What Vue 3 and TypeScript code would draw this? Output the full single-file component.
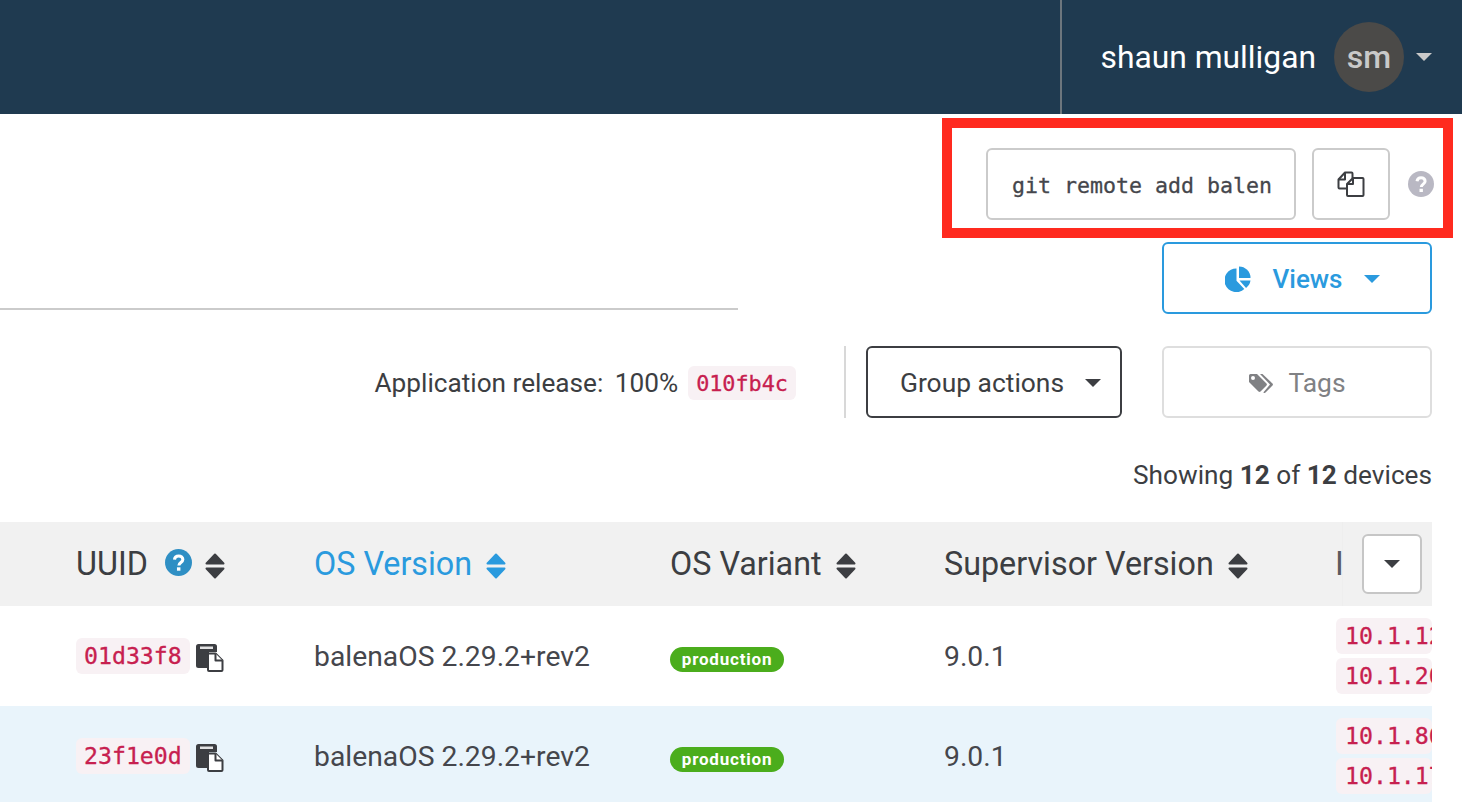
<script setup lang="ts">
interface Device {
  uuid: string;
  os: string;
  variant: string;
  supervisor: string;
  ips: string[];
  selected?: boolean;
}

const columns = [
  { label: 'UUID', help: true },
  { label: 'OS Version', active: true },
  { label: 'OS Variant' },
  { label: 'Supervisor Version' },
];

const devices: Device[] = [
  { uuid: '01d33f8', os: 'balenaOS 2.29.2+rev2', variant: 'production', supervisor: '9.0.1', ips: ['10.1.123.45', '10.1.201.7'] },
  { uuid: '23f1e0d', os: 'balenaOS 2.29.2+rev2', variant: 'production', supervisor: '9.0.1', ips: ['10.1.86.12', '10.1.174.9'], selected: true },
];
</script>

<template>
  <div class="page">
    <header class="topbar">
      <div class="user">
        <span class="user-name">shaun mulligan</span>
        <span class="avatar">sm</span>
        <span class="caret caret-light"></span>
      </div>
    </header>

    <main class="content">
      <div class="git-row">
        <div class="git-input">git remote add balen</div>
        <button class="copy-btn" type="button">
          <svg width="30" height="28" viewBox="0 0 30 28" fill="none" stroke="#3c3e42" stroke-width="2" stroke-linejoin="round">
            <path d="M11 18.500H3.500a1 1 0 0 1-1-1V9.500l6.500-7h6.500a1 1 0 0 1 1 1V8" />
            <path d="M2.500 9.500h6.500v-7" />
            <path d="M17 8h9.500a1 1 0 0 1 1 1v16a1 1 0 0 1-1 1H12a1 1 0 0 1-1-1V14z" fill="#fff" />
            <path d="M11 14h6V8" />
          </svg>
        </button>
        <svg class="help" width="26" height="26" viewBox="0 0 26 26">
          <circle cx="13" cy="13" r="13" fill="#b9b8c3" />
          <path d="M9 10.200c.3-2.200 2-3.400 4.100-3.400 2.300 0 4 1.400 4 3.400 0 2.900-3.800 2.900-3.800 5.800" fill="none" stroke="#fff" stroke-width="3" />
          <rect x="11.500" y="17.800" width="3.400" height="3.200" fill="#fff" />
        </svg>
      </div>

      <div class="views-row">
        <div class="tabs-line"></div>
        <button class="btn btn-views" type="button">
          <svg width="26" height="26" viewBox="0 0 26 26" fill="#2a9ade">
            <path d="M11.500 2.500v12.200l7.800 8.200A11.800 11.800 0 1 1 11.500 2.500z" />
            <path d="M14 0.500a11.500 11.500 0 0 1 11.500 11.500H14z" />
            <path d="M14.500 14.500h11a11.800 11.800 0 0 1-4.400 7.400z" />
          </svg>
          <span>Views</span>
          <span class="caret caret-blue"></span>
        </button>
      </div>

      <div class="toolbar">
        <span class="release">Application release: <span class="release-pct">100%</span></span>
        <code class="code code-release">010fb4c</code>
        <span class="toolbar-sep"></span>
        <button class="btn btn-group" type="button">
          <span>Group actions</span>
          <span class="caret caret-dark"></span>
        </button>
        <button class="btn btn-tags" type="button">
          <svg width="26" height="20" viewBox="0 0 26 20" fill="#808184">
            <path d="M1 2.500A1.500 1.500 0 0 1 2.500 1H9l9.500 9.500a1.500 1.500 0 0 1 0 2L12.500 18.500a1.500 1.500 0 0 1-2 0L1 9zM5 7a2 2 0 1 0 0-4 2 2 0 0 0 0 4z" fill-rule="evenodd" />
            <path d="M12 1h2.500L24.500 10.500a1.500 1.500 0 0 1 0 2L17.500 19.500a1.600 1.600 0 0 1-2.200 0L22 11.500z" />
          </svg>
          <span>Tags</span>
        </button>
      </div>

      <p class="showing">Showing <b>12</b> of <b>12</b> devices</p>

      <div class="table">
        <div class="table-row table-head">
          <div v-for="col in columns" :key="col.label" :class="['th', { active: col.active }]">
            <span>{{ col.label }}</span>
            <svg v-if="col.help" class="th-help" width="27" height="27" viewBox="0 0 28 28">
              <circle cx="14" cy="14" r="14" fill="#2f8fc4" />
              <path d="M9.800 11c.3-2.400 2.100-3.700 4.400-3.700 2.500 0 4.300 1.500 4.300 3.700 0 3.100-4.100 3.100-4.100 6.200" fill="none" stroke="#fff" stroke-width="3.200" />
              <rect x="12.400" y="19" width="3.600" height="3.500" fill="#fff" />
            </svg>
            <svg class="sort" width="20" height="26" viewBox="0 0 20 26" fill="currentColor" stroke="currentColor" stroke-width="2" stroke-linejoin="round">
              <path d="M10 1.500 18.500 10.500H1.500z" />
              <path d="M1.500 15.500h17L10 24.500z" />
            </svg>
          </div>
          <div class="th th-cut"><span>I</span></div>
          <div class="col-picker">
            <button class="picker-btn" type="button"><span class="caret caret-dark"></span></button>
          </div>
        </div>

        <div v-for="device in devices" :key="device.uuid" :class="['table-row', 'device', { selected: device.selected }]">
          <div class="td td-uuid">
            <code class="code code-uuid">{{ device.uuid }}</code>
            <svg class="copy-small" width="28" height="28" viewBox="0 0 28 28">
              <path d="M2.500 0h16A2.500 2.500 0 0 1 21 2.500V8h-8v16H2.500A2.500 2.500 0 0 1 0 21.500v-19A2.500 2.500 0 0 1 2.500 0z" fill="#3c3e42" />
              <rect x="4" y="2.500" width="13" height="2.500" fill="#fff" opacity="0.85" />
              <path d="M13 9.500h6.500l7 7V26a1 1 0 0 1-1 1H13a1 1 0 0 1-1-1V10.500a1 1 0 0 1 1-1z" fill="#fff" stroke="#3c3e42" stroke-width="2" stroke-linejoin="round" />
              <path d="M19.500 9.500v7h7" fill="#fff" stroke="#3c3e42" stroke-width="2" stroke-linejoin="round" />
            </svg>
          </div>
          <div class="td">{{ device.os }}</div>
          <div class="td td-variant"><span class="badge">{{ device.variant }}</span></div>
          <div class="td">{{ device.supervisor }}</div>
          <div class="td td-ips">
            <code v-for="ip in device.ips" :key="ip" class="code code-ip">{{ ip }}</code>
          </div>
        </div>
      </div>
    </main>

    <div class="annotation"></div>
  </div>
</template>

<style>
html,
body {
  margin: 0;
  background: #fff;
  overflow: hidden;
}
</style>

<style scoped>
.page {
  position: relative;
  width: 1462px;
  height: 802px;
  overflow: hidden;
  font-family: Roboto, "Liberation Sans", sans-serif;
  color: #3c3e42;
}

.topbar {
  display: flex;
  justify-content: flex-end;
  height: 114px;
  padding-right: 30px;
  box-sizing: border-box;
  background: #1f3a50;
}

.user {
  display: flex;
  align-items: center;
  padding-left: 38px;
  border-left: 2px solid #6d767d;
}

.user-name {
  font-size: 31.800px;
  color: #fff;
}

.avatar {
  display: flex;
  align-items: center;
  justify-content: center;
  width: 70px;
  height: 70px;
  margin-left: 18px;
  border-radius: 50%;
  background: #4b4a48;
  color: #c9c9c9;
  font-size: 32px;
  font-weight: 500;
}

.caret {
  display: inline-block;
  width: 0;
  height: 0;
  border-left: 8px solid transparent;
  border-right: 8px solid transparent;
  border-top: 8px solid #3c3e42;
}

.caret-light {
  margin-left: 12px;
  border-top-color: #c9c9c9;
}

.caret-blue {
  border-top-color: #2a9ade;
}

.content {
  padding-right: 30px;
}

.git-row {
  display: flex;
  justify-content: flex-end;
  align-items: center;
  height: 72px;
  margin-top: 34px;
  margin-right: -2px;
}

.git-input {
  width: 310px;
  height: 72px;
  box-sizing: border-box;
  padding: 0 24px;
  border: 2px solid #cbcbcb;
  border-radius: 6px;
  font-family: "DejaVu Sans Mono", monospace;
  font-size: 21.600px;
  line-height: 72px;
  color: #45464c;
  -webkit-text-stroke: 0.3px #45464c;
  white-space: nowrap;
  overflow: hidden;
}

.copy-btn {
  display: flex;
  align-items: center;
  justify-content: center;
  width: 78px;
  height: 72px;
  margin-left: 16px;
  padding: 0;
  border: 2px solid #cbcbcb;
  border-radius: 6px;
  background: #fff;
}

.help {
  margin-left: 18px;
}

.views-row {
  display: flex;
  justify-content: space-between;
  align-items: flex-end;
  height: 72px;
  margin-top: 22px;
}

.tabs-line {
  width: 738px;
  height: 2px;
  margin-bottom: 4px;
  background: #cbcbcb;
}

.btn {
  display: flex;
  align-items: center;
  justify-content: center;
  height: 72px;
  box-sizing: border-box;
  padding: 2px 0 0;
  border-radius: 6px;
  background: #fff;
  font-family: inherit;
  font-size: 26.400px;
  font-weight: 400;
}

.btn-views {
  width: 270px;
  gap: 21px;
  padding-left: 11px;
  border: 2px solid #2a9ade;
  color: #2a9ade;
  font-weight: 500;
  font-size: 26px;
}

.toolbar {
  display: flex;
  justify-content: flex-end;
  align-items: center;
  margin-top: 32px;
}

.release {
  padding-top: 2px;
  font-size: 26.200px;
}

.release-pct {
  margin-left: 5px;
}

.code {
  font-family: "DejaVu Sans Mono", monospace;
  border-radius: 6px;
  background: #f8f1f4;
  color: #c7204f;
  -webkit-text-stroke: 0.3px #c7204f;
  font-weight: 400;
}

.code-release {
  margin-left: 10px;
  margin-top: 2px;
  padding: 1px 8px 0;
  font-size: 21.800px;
  line-height: 33px;
}

.toolbar-sep {
  width: 2px;
  height: 72px;
  margin: 0 20px 0 48px;
  background: #d8d8d8;
}

.btn-group {
  width: 256px;
  gap: 21px;
  padding-left: 13px;
  margin-right: 40px;
  border: 2px solid #3c3e42;
  color: #3c3e42;
}

.btn-tags {
  width: 270px;
  gap: 14px;
  border: 2px solid #dedede;
  color: #808184;
}

.showing {
  margin: 42px 0 32px;
  text-align: right;
  font-size: 26.200px;
  line-height: 30px;
}

.showing b {
  font-weight: 700;
}

.table {
  width: 1432px;
  overflow: hidden;
}

.table-row {
  position: relative;
  display: grid;
  grid-template-columns: 238px 356px 274px 394px 94px;
  padding-left: 76px;
}

.table-head {
  height: 84px;
  background: #f1f1f1;
  font-size: 32.300px;
}

.th {
  display: flex;
  align-items: center;
  white-space: nowrap;
}

.th .sort {
  margin-top: 3px;
  margin-left: 14px;
}

.th-help {
  margin-left: 17px;
  margin-bottom: 3px;
}

.th .th-help + .sort {
  margin-left: 13px;
}

.th.active {
  color: #2a9ade;
}

.th-cut {
  margin-left: -3px;
  color: #5a5b60;
}

.col-picker {
  position: absolute;
  top: 0;
  right: 0;
  bottom: 0;
  display: flex;
  align-items: center;
  width: 90px;
  box-sizing: border-box;
  padding-left: 19px;
  border-left: 1px solid #eeeeee;
  background: #f1f1f1;
}

.picker-btn {
  display: flex;
  align-items: center;
  justify-content: center;
  width: 60px;
  height: 60px;
  padding: 0;
  border: 2px solid #c6c6c6;
  border-radius: 6px;
  background: #fff;
}

.device {
  height: 100px;
  align-items: center;
  font-size: 28.300px;
  color: #45464c;
}

.device.selected {
  background: #e9f4fb;
}

.td-uuid {
  display: flex;
  align-items: center;
  gap: 6px;
}

.copy-small {
  margin-top: 4px;
}

.td-variant {
  display: flex;
  align-items: center;
}

.badge {
  width: 114px;
  margin-top: 7px;
  border-radius: 13px;
  background: #4bad1c;
  color: #fff;
  font-size: 17px;
  font-weight: 700;
  letter-spacing: 0.8px;
  line-height: 25px;
  text-align: center;
}

.code-uuid {
  padding: 0 8px;
  font-size: 23.200px;
  line-height: 36px;
}

.td-ips {
  display: flex;
  flex-direction: column;
  gap: 4px;
  margin-left: -2px;
  overflow: hidden;
}

.code-ip {
  padding: 0 9px;
  font-size: 23.200px;
  line-height: 36px;
  white-space: nowrap;
}

.annotation {
  position: absolute;
  left: 942px;
  top: 118px;
  width: 511px;
  height: 120px;
  box-sizing: border-box;
  border: 10px solid #ff2a1f;
  pointer-events: none;
}
</style>
